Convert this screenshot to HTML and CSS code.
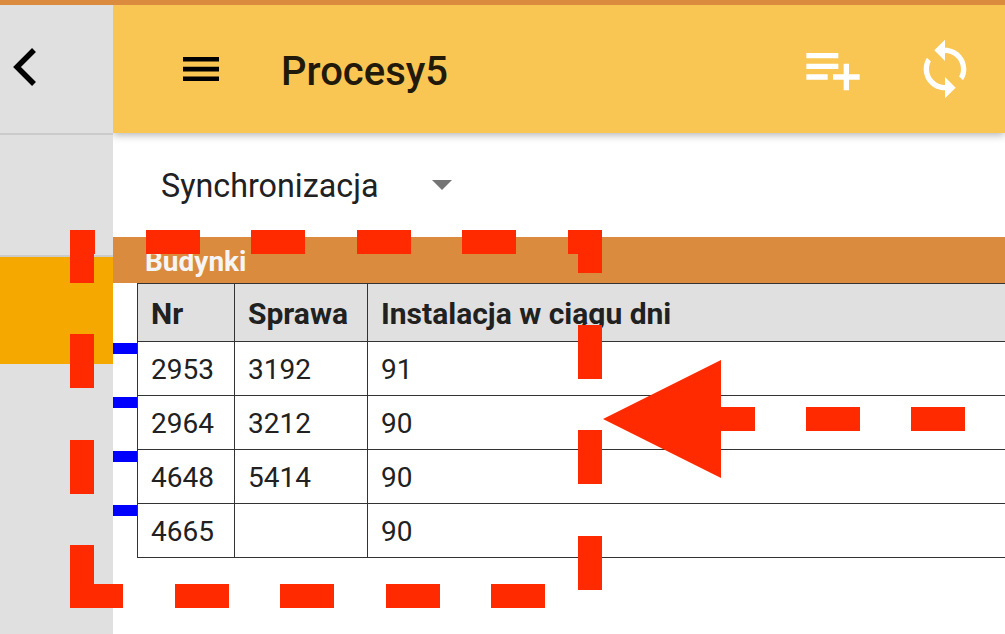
FILE: index.html
```html
<!DOCTYPE html>
<html lang="pl">
<head>
    <meta charset="UTF-8">
    <meta name="viewport" content="width=device-width, initial-scale=1.0">
    <title>Procesy5</title>
    <link rel="stylesheet" href="styles.css">
</head>
<body>
    <div class="top-strip"></div>
    <div class="app">
        <div class="sidebar">
            <div class="side-back">
                <svg class="back-icon" width="26" height="40" viewBox="0 0 26 40">
                    <path d="M22 3 L5 20 L22 37" fill="none" stroke="#000" stroke-width="5.5"/>
                </svg>
            </div>
            <div class="side-item"></div>
            <div class="side-item-active"></div>
        </div>
        <div class="main">
            <div class="toolbar">
                <svg class="menu-icon" width="36" height="24" viewBox="0 0 36 24">
                    <path d="M0 0H36V4.6H0ZM0 9.8H36V14.4H0ZM0 19.6H36V24H0Z"/>
                </svg>
                <div class="title">Procesy5</div>
                <div class="toolbar-actions">
                    <svg class="action" width="64" height="64" viewBox="0 0 24 24">
                        <path fill="#fff" d="M14 10H2v2h12v-2zm0-4H2v2h12V6zm4 8v-4h-2v4h-4v2h4v4h2v-4h4v-2h-4zM2 16h8v-2H2v2z"/>
                    </svg>
                    <svg class="action" width="64" height="64" viewBox="0 0 24 24">
                        <path fill="#fff" d="M12 4V1L8 5l4 4V6c3.31 0 6 2.69 6 6 0 1.01-.25 1.97-.7 2.8l1.46 1.46C19.54 15.03 20 13.57 20 12c0-4.42-3.58-8-8-8zm0 14c-3.31 0-6-2.69-6-6 0-1.01.25-1.97.7-2.8L5.24 7.74C4.46 8.97 4 10.43 4 12c0 4.42 3.58 8 8 8v3l4-4-4-4v3z"/>
                    </svg>
                </div>
            </div>
            <div class="select-row">
                <span class="select-label">Synchronizacja</span>
                <span class="caret"></span>
            </div>
            <div class="band">Budynki</div>
            <div class="table-area">
                <div class="markers">
                    <span></span><span></span><span></span><span></span>
                </div>
                <table class="grid">
                    <colgroup>
                        <col class="col-nr">
                        <col class="col-sprawa">
                        <col>
                    </colgroup>
                    <thead>
                        <tr><th>Nr</th><th>Sprawa</th><th>Instalacja w ciągu dni</th></tr>
                    </thead>
                    <tbody>
                        <tr><td>2953</td><td>3192</td><td>91</td></tr>
                        <tr><td>2964</td><td>3212</td><td>90</td></tr>
                        <tr><td>4648</td><td>5414</td><td>90</td></tr>
                        <tr><td>4665</td><td></td><td>90</td></tr>
                    </tbody>
                </table>
            </div>
        </div>
    </div>

    <!-- red annotation drawn over the screen -->
    <svg class="annotation" width="1005" height="634" viewBox="0 0 1005 634">
        <g fill="#ff2a00">
            <path d="M70 230H95V254H94V283H70Z"/>
            <rect x="146" y="230" width="54" height="24"/>
            <rect x="251" y="230" width="54" height="24"/>
            <rect x="357" y="230" width="54" height="24"/>
            <rect x="462" y="230" width="54" height="24"/>
            <path d="M568 230H602V273H578V254H568Z"/>
            <rect x="70" y="334" width="24" height="54"/>
            <rect x="70" y="440" width="24" height="54"/>
            <path d="M70 545H94V584H123V608H70Z"/>
            <rect x="175" y="584" width="54" height="24"/>
            <rect x="280" y="584" width="54" height="24"/>
            <rect x="386" y="584" width="54" height="24"/>
            <rect x="491" y="584" width="54" height="24"/>
            <rect x="578" y="325" width="24" height="54"/>
            <rect x="578" y="430" width="24" height="54"/>
            <rect x="578" y="536" width="24" height="54"/>
            <path d="M603 419L721 360V407H755V431H721V478Z"/>
            <rect x="806" y="407" width="54" height="24"/>
            <rect x="911" y="407" width="54" height="24"/>
        </g>
    </svg>
</body>
</html>
```

FILE: styles.css
```css
html, body {
    margin: 0;
    height: 100%;
    overflow: hidden;
}
body {
    position: relative;
    display: flex;
    flex-direction: column;
    font-family: Roboto, "Liberation Sans", sans-serif;
    color: #212121;
    background-color: #fff;
}
.top-strip {
    height: 5px;
    background-color: #db8b3d;
}
.app {
    flex: 1;
    display: flex;
    min-height: 0;
}

.sidebar {
    width: 113px;
    flex-shrink: 0;
    background-color: #e0e0e0;
}
.side-back {
    height: 128px;
    box-sizing: border-box;
    display: flex;
    align-items: center;
    padding: 0 0 4px 12px;
}
.side-item {
    height: 120px;
    border-top: 2px solid #cbcbcb;
    border-bottom: 2px solid #cbcbcb;
}
.side-item-active {
    height: 107px;
    background-color: #f5a800;
}

.main {
    flex: 1;
    min-width: 0;
    overflow: hidden;
}
.toolbar {
    position: relative;
    height: 128px;
    display: flex;
    align-items: center;
    padding-left: 70px;
    background-color: #fac653;
    box-shadow: 0 2px 8px rgba(0, 0, 0, 0.3);
}
.menu-icon {
    flex-shrink: 0;
}
.title {
    margin: 4px 0 0 62px;
    font-size: 40px;
    font-weight: 500;
    color: #211a0b;
}
.toolbar-actions {
    margin-left: auto;
    display: flex;
    gap: 48px;
    padding-right: 28px;
}

.select-row {
    height: 104px;
    display: flex;
    align-items: center;
    padding-left: 48px;
}
.select-label {
    padding-top: 2px;
    font-size: 32.3px;
}
.caret {
    margin-left: 53px;
    width: 0;
    height: 0;
    border-left: 10px solid transparent;
    border-right: 10px solid transparent;
    border-top: 10px solid #757575;
}

.band {
    height: 46px;
    box-sizing: border-box;
    padding: 7px 0 0 32px;
    font-size: 28px;
    line-height: 36px;
    font-weight: 700;
    color: #f5f5f5;
    background-color: #db8b3d;
}

.table-area {
    display: flex;
}
.markers {
    width: 24px;
    flex-shrink: 0;
    display: flex;
    flex-direction: column;
    gap: 43px;
    padding-top: 60px;
}
.markers span {
    height: 11px;
    background-color: #0000ff;
}
.grid {
    width: 900px;
    flex-shrink: 0;
    table-layout: fixed;
    border-collapse: collapse;
    font-size: 28px;
}
.col-nr {
    width: 97px;
}
.col-sprawa {
    width: 133px;
}
.grid th, .grid td {
    padding: 2px 0 0 13px;
    border: 1px solid #333;
    text-align: left;
}
.grid th {
    height: 55px;
    font-size: 30px;
    font-weight: 700;
    background-color: #e0e0e0;
}
.grid td {
    height: 51px;
}

.annotation {
    position: absolute;
    top: 0;
    left: 0;
}
```
